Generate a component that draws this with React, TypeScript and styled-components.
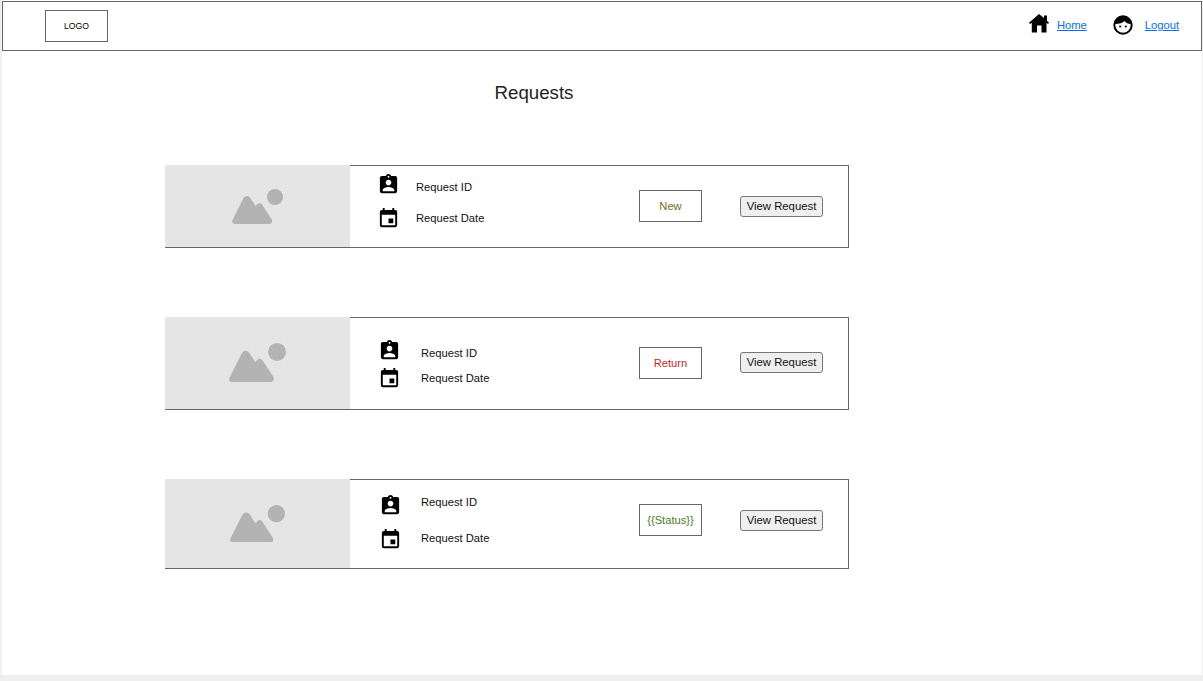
import React from 'react';
import styled, { createGlobalStyle } from 'styled-components';
import { MdAssignmentInd, MdEvent } from 'react-icons/md';

type RequestCard = {
  height: number;
  picture: number;
  iconLeft: number;
  textGap: number;
  top: number;
  rowGap: number;
  idShift: number;
  dateShift: number;
  actionsLift: number;
  status: string;
  statusColor: string;
};

const cards: RequestCard[] = [
  { height: 83, picture: 51, iconLeft: 27, textGap: 16, top: 13, rowGap: 11, idShift: -3, dateShift: 0, actionsLift: 0.5, status: 'New', statusColor: '#7a6a1a' },
  { height: 93, picture: 57, iconLeft: 28, textGap: 20, top: 27, rowGap: 5, idShift: -3, dateShift: 0, actionsLift: 1, status: 'Return', statusColor: '#c8281e' },
  { height: 90, picture: 55, iconLeft: 29, textGap: 19, top: 14, rowGap: 17, idShift: 3, dateShift: 1, actionsLift: 4, status: '{{Status}}', statusColor: '#4a7a2a' },
];

function PictureIcon({ size }: { size: number }) {
  return (
    <svg width={size} height={(size * 35) / 51} viewBox="0 0 51 35" fill="#b3b3b3">
      <circle cx="43" cy="8" r="8" />
      <path d="M3 35C0 35-.5 32 1 30L11 10C13 6 17 6 19 10L23.500 17 25 15.500C26.500 13.500 28.500 13.500 30 15.500L39.500 30C41 32 40 35 37 35Z" />
    </svg>
  );
}

function HomeIcon() {
  return (
    <svg width="20" height="19" viewBox="0 0 20 19" fill="#000">
      <path fillRule="evenodd" d="M10 0L15 4V1.500H18V6.800L20 8.800 19 10 17.500 8.800V18.500H12.500V11.500H8V18.500H2.800V8.800L1 10 0 8.800Z" />
    </svg>
  );
}

function FaceIcon() {
  return (
    <svg width="20" height="20" viewBox="0 0 20 20">
      <circle cx="10" cy="10" r="8.700" fill="#fff" stroke="#000" strokeWidth="2" />
      <path d="M2 9C2 4 6 1.500 10 1.500S18 4 18 9c-3 0-5-1-6.500-3C10 8 6 9 2 9z" />
      <circle cx="7.200" cy="11.500" r="1.100" />
      <circle cx="12.800" cy="11.500" r="1.100" />
    </svg>
  );
}

function App() {
  return (
    <Canvas>
      <GlobalStyle />
      <Header>
        <Logo>LOGO</Logo>
        <Nav>
          <NavItem>
            <HomeLift>
              <HomeIcon />
            </HomeLift>
            <NavLink href="#">Home</NavLink>
          </NavItem>
          <NavItem>
            <FaceIcon />
            <NavLink href="#" $wide>
              Logout
            </NavLink>
          </NavItem>
        </Nav>
      </Header>
      <Title>Requests</Title>
      <CardList>
        {cards.map((card) => (
          <Card key={card.status} $height={card.height}>
            <Picture>
              <PictureIcon size={card.picture} />
            </Picture>
            <Details $left={card.iconLeft} $top={card.top} $gap={card.rowGap}>
              <DetailRow $gap={card.textGap}>
                <IconSlot $shift={card.idShift}>
                  <MdAssignmentInd size={23} color="#000" />
                </IconSlot>
                <DetailText>Request ID</DetailText>
              </DetailRow>
              <DetailRow $gap={card.textGap}>
                <IconSlot $shift={card.dateShift}>
                  <MdEvent size={23} color="#000" />
                </IconSlot>
                <DetailText>Request Date</DetailText>
              </DetailRow>
            </Details>
            <Actions $lift={card.actionsLift}>
              <Status $color={card.statusColor}>{card.status}</Status>
              <ViewButton>View Request</ViewButton>
            </Actions>
          </Card>
        ))}
      </CardList>
    </Canvas>
  );
}

const GlobalStyle = createGlobalStyle`
  html, body {
    margin: 0;
    background: #efefef;
    font-family: "Liberation Sans", Arial, sans-serif;
  }
`;

const Canvas = styled.div`
  width: 1200px;
  height: 675px;
  margin-left: 2px;
  padding-top: 1px;
  box-sizing: border-box;
  background: #fff;
  overflow: hidden;
`;

const Header = styled.header`
  height: 50px;
  box-sizing: border-box;
  border: 1px solid #666;
  display: flex;
  align-items: center;
  justify-content: space-between;
  padding: 0 22px 0 42px;
`;

const Logo = styled.div`
  width: 63px;
  height: 32px;
  box-sizing: border-box;
  border: 1px solid #666;
  display: flex;
  align-items: center;
  justify-content: center;
  font-size: 8.67px;
  color: #000;
`;

const Nav = styled.nav`
  display: flex;
  align-items: center;
  gap: 26px;
  margin-top: -2px;
`;

const NavItem = styled.div`
  display: flex;
  align-items: center;
  gap: 8px;
`;

const HomeLift = styled.span`
  display: flex;
  margin-bottom: 4px;
`;

const NavLink = styled.a<{ $wide?: boolean }>`
  margin-left: ${(p) => (p.$wide ? '4px' : '0')};
  font-size: 11.2px;
  color: #0a6cff;
  text-decoration: underline;
`;

const Title = styled.h1`
  margin: 30px 0 0;
  width: 1064px;
  text-align: center;
  font-size: 18.67px;
  font-weight: 400;
  line-height: 24px;
  color: #222;
`;

const CardList = styled.div`
  margin: 60px 0 0 163px;
  width: 684px;
  display: flex;
  flex-direction: column;
  gap: 69px;
`;

const Card = styled.article<{ $height: number }>`
  height: ${(p) => p.$height}px;
  box-sizing: border-box;
  border: 1px solid #666;
  border-left: 0;
  display: flex;
  align-items: center;
  padding-right: 25px;
`;

const Picture = styled.div`
  width: 185px;
  align-self: stretch;
  flex: none;
  margin-top: -1px;
  background: #e5e5e5;
  display: flex;
  align-items: center;
  justify-content: center;
`;

const Details = styled.div<{ $left: number; $top: number; $gap: number }>`
  align-self: flex-start;
  flex: 1;
  padding: ${(p) => p.$top}px 0 0 ${(p) => p.$left}px;
  display: flex;
  flex-direction: column;
  gap: ${(p) => p.$gap}px;
`;

const DetailRow = styled.div<{ $gap: number }>`
  display: flex;
  align-items: center;
  gap: ${(p) => p.$gap}px;
`;

// the icons sit a few pixels off their label's centre line
const IconSlot = styled.span<{ $shift: number }>`
  display: flex;
  margin-top: ${(p) => Math.min(p.$shift * 2, 0)}px;
  margin-bottom: ${(p) => Math.min(-p.$shift * 2, 0)}px;
`;

const DetailText = styled.span`
  padding-bottom: 2px;
  font-size: 11.2px;
  color: #111;
`;

const Actions = styled.div<{ $lift: number }>`
  display: flex;
  align-items: center;
  gap: 38px;
  margin-bottom: ${(p) => p.$lift * 2}px;
`;

const Status = styled.div<{ $color: string }>`
  width: 63px;
  height: 32px;
  box-sizing: border-box;
  border: 1px solid #666;
  display: flex;
  align-items: center;
  justify-content: center;
  font-size: 11.2px;
  color: ${(p) => p.$color};
`;

const ViewButton = styled.button`
  width: 83px;
  height: 21px;
  padding: 0 0 1px;
  box-sizing: border-box;
  background: #efefef;
  border: 1px solid #767676;
  border-radius: 3px;
  font-family: inherit;
  font-size: 11.33px;
  color: #111;
`;

export default App;
